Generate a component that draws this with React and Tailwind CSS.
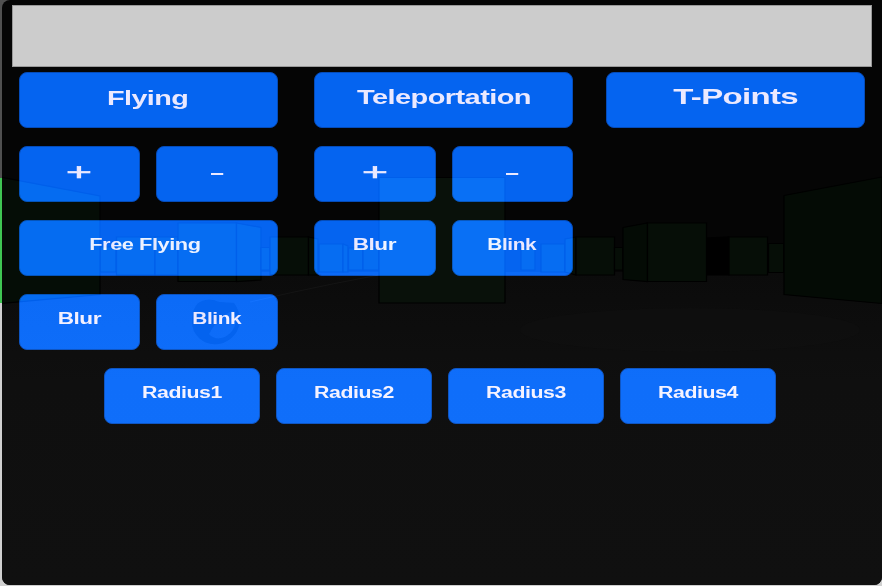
const face =
  "relative flex items-center justify-center rounded-lg border border-[#0047b4] bg-[#005feb] mix-blend-plus-lighter";

function Key({ label, box = "w-[121.5px]", text = "text-[16px] scale-x-[1.28] -top-[3.5px]" }) {
  return (
    <button className={`${face} h-[56px] shrink-0 ${box}`}>
      <span className={`relative inline-block whitespace-nowrap font-bold leading-none text-[#e6e4fa] ${text}`}>
        {label}
      </span>
    </button>
  );
}

function Sign({ plus = false }) {
  return (
    <Key
      label={plus ? "+" : "-"}
      text={plus ? "text-[24px] scale-x-[1.85] -top-[2px] !font-normal [-webkit-text-stroke:0.6px_#e6e4fa]" : "text-[25px] scale-x-[2] -top-[1.5px] !font-normal"}
    />
  );
}

function Scene() {
  return (
    <svg className="absolute inset-0 h-full w-full" viewBox="0 0 882 586">
      <defs>
        <linearGradient id="floor" x1="0" y1="0" x2="0" y2="1">
          <stop offset="0" stopColor="#0b0b0b" />
          <stop offset="0.35" stopColor="#0f0f0f" />
          <stop offset="1" stopColor="#101010" />
        </linearGradient>
      </defs>
      <rect width="882" height="586" fill="#050505" />
      <rect y="272" width="882" height="314" fill="url(#floor)" />
      <ellipse cx="690" cy="330" rx="170" ry="22" fill="#101010" opacity="0.5" />
      <path d="M250 302 Q330 283 424 267" fill="none" stroke="#141414" />
      <g fill="#060e07" stroke="#000000" strokeWidth="1.2">
        <path d="M100 247H116V272H100Z" />
        <path d="M116.500 237H155V275H116.500Z" />
        <path d="M155 237H178V275H155Z" />
        <path d="M178 223H236.500V281.500H178Z" />
        <path d="M236.500 223L261 227.500V280L236.500 281.500Z" />
        <path d="M261 247.500H270V270H261Z" />
        <path d="M270 237H308.500V275H270Z" />
        <path d="M308.500 237L318 239V275H308.500Z" />
        <path d="M319 244H343V272H319Z" />
        <path d="M343 244L348 246V272H343Z" />
        <path d="M348.500 248H363V270H348.500Z" />
        <path d="M363 248H379V270H363Z" />
        <path d="M521 248H535V270H521Z" />
        <path d="M541 244H565V272H541Z" />
        <path d="M565 239L576 237V275L565 272Z" />
        <path d="M576 237H614.500V275H576Z" />
        <path d="M614.500 247.500H623V270H614.500Z" />
        <path d="M623 227.500L647.500 223V281.500L623 279.500Z" fill="#040b05" />
        <path d="M647.500 223H706.500V281.500H647.500Z" />
        <path d="M707 238L729 237V275H707Z" fill="#000000" />
        <path d="M729 237H767.500V275H729Z" />
        <path d="M768.500 243.500H784V272.500H768.500Z" />
        <path d="M784 195.500L882 177V303.500L784 294.500Z" fill="#040b05" />
        <path d="M0 177L100 196V294.500L0 303.500Z" fill="#050d06" />
        <path d="M379 177.500H505V303H379Z" fill="#09110a" />
      </g>
      <path
        d="M192 322Q192 305 202 301Q211 298 219 302L234 303Q240 311 240 321Q238 337 223 343Q209 347 199 338Q192 331 192 322ZM233 311Q220 314 209 334Q215 341 225 337Q234 332 236 322Q236 315 233 311Z"
        fill="#040404"
        fillRule="evenodd"
      />
    </svg>
  );
}

export default function App() {
  return (
    <div className="relative h-[586px] w-[882px] overflow-hidden bg-[#d0d0d0] pl-0.5 font-['Liberation_Sans',Arial,sans-serif]">
      <div className="absolute left-0 top-0 h-[178px] w-3 bg-[#505050]" />
      <div className="absolute left-0 top-[178px] h-[125px] w-0.5 bg-[#3fc653]" />
      <div className="relative isolate h-[585px] w-[880px] overflow-hidden rounded-b-lg rounded-tl-lg">
        <div className="absolute -left-0.5 top-0 h-[586px] w-[882px]">
          <Scene />
        </div>
        <main className="flex flex-col pl-[10px] pt-[5px]">
          <div className="relative h-[62px] w-[860px] border border-[#999999] bg-[#cccccc]" />
          <div className="mt-[5px] flex items-start pl-[6.5px]">
            <section className="flex w-[259px] flex-wrap gap-x-4 gap-y-[18px]">
              <Key label="Flying" box="w-[259px]" text="text-[21px] tracking-[-0.02em] scale-x-[1.37] -top-[3px]" />
              <Sign plus />
              <Sign />
              <Key label="Free Flying" box="w-[259px]" text="text-[16px] tracking-[-0.02em] scale-x-[1.36] left-[-3px] -top-[3.5px]" />
              <Key label="Blur" text="text-[16px] tracking-[-0.02em] scale-x-[1.41] -top-[3.5px]" />
              <Key label="Blink" text="text-[16px] tracking-[-0.02em] scale-x-[1.3] -top-[3.5px]" />
            </section>
            <section className="ml-[36.500px] flex w-[259px] flex-wrap gap-x-4 gap-y-[18px]">
              <Key label="Teleportation" box="w-[259px]" text="text-[20px] tracking-[-0.02em] scale-x-[1.45] -top-[3px]" />
              <Sign plus />
              <Sign />
              <Key label="Blur" text="text-[16px] tracking-[-0.02em] scale-x-[1.41] -top-[3.5px]" />
              <Key label="Blink" text="text-[16px] tracking-[-0.02em] scale-x-[1.3] -top-[3.5px]" />
            </section>
            <section className="ml-[33px] flex w-[259px]">
              <Key label="T-Points" box="w-[259px]" text="text-[22px] tracking-[-0.02em] scale-x-[1.5] -top-[3px]" />
            </section>
          </div>
          <div className="mt-[18px] flex gap-4 pl-[92px]">
            {["Radius1", "Radius2", "Radius3", "Radius4"].map((name) => (
              <Key key={name} label={name} box="w-[156px]" text="text-[16px] tracking-[-0.02em] scale-x-[1.33] -top-[3.5px]" />
            ))}
          </div>
        </main>
      </div>
    </div>
  );
}
